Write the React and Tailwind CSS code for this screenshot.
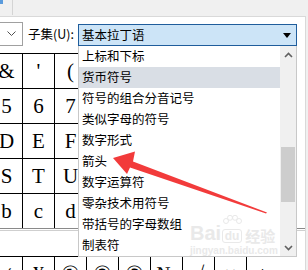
import React from 'react';

const cjk = { fontFamily: '"Noto Sans CJK SC", "Noto Sans", sans-serif' };
const serif = { fontFamily: '"Liberation Serif", "DejaVu Serif", serif' };

const subsets = [
  '上标和下标',
  '货币符号',
  '符号的组合分音记号',
  '类似字母的符号',
  '数字形式',
  '箭头',
  '数字运算符',
  '零杂技术用符号',
  '带括号的字母数组',
  '制表符',
];

const recent = ['≠', '¥', '①', '②', '③', '№', '√', '×', '±'];

function charAt(r, c) {
  return String.fromCharCode(0x26 + r * 15 + c);
}

function Chevron({ up }) {
  return (
    <svg width="9" height="6" viewBox="0 0 9 6">
      <polyline
        points={up ? '1,5 4.5,1.5 8,5' : '1,1 4.5,4.5 8,1'}
        fill="none"
        stroke="#606060"
        strokeWidth="1.6"
      />
    </svg>
  );
}

export default function App() {
  return (
    <div className="relative w-[308px] h-[270px] overflow-hidden bg-[#f0f0f0]" style={cjk}>
      {/* top strip */}
      <div className="h-[16px] flex">
        <div className="w-[3px] h-[4px] bg-[#5a9bdc]"></div>
        <div className="ml-[9px] w-px h-[15px] bg-[#d4d4d4]"></div>
      </div>

      {/* panel */}
      <div className="relative w-[306px] h-[254px] bg-white border-t border-r border-[#d9d9d9] overflow-hidden">
        <div className="flex items-end h-[29px]">
          <div className="w-[23px] h-[24px] border-t border-r border-b border-[#a0a0a0] flex items-center justify-center">
            <svg width="9" height="6" viewBox="0 0 9 6">
              <polyline points="0.5,0.5 4.5,4.5 8.5,0.5" fill="none" stroke="#505050" strokeWidth="1" />
            </svg>
          </div>
          <div className="ml-[5px] w-[50px] h-[24px] flex items-center text-[12.5px] text-black">子集(U):</div>
          <div className="w-[219px] h-[22px] border border-[#1f5d9c] bg-[#cce4f7] flex items-center justify-between pl-[3px] pr-[5px] text-[12.5px] text-black">
            <span>基本拉丁语</span>
            <svg width="8" height="5" viewBox="0 0 8 5">
              <polygon points="0,0 8,0 4,5" fill="#000" />
            </svg>
          </div>
        </div>

        {/* symbol grid */}
        <div className="mt-[7px] -ml-[10px] flex flex-col" style={serif}>
          {[0, 1, 2, 3, 4].map((r) => (
            <div key={r} className="flex">
              {[0, 1, 2, 3, 4, 5, 6, 7, 8].map((c) => (
                <div
                  key={c}
                  className="w-[32px] h-[35px] border-l border-t border-black flex items-center justify-center text-[21px] text-black leading-none"
                >
                  {charAt(r, c)}
                </div>
              ))}
            </div>
          ))}
        </div>
        <div className="h-px bg-[#8a8a8a]"></div>
        <div className="h-px bg-white"></div>
        <div className="h-px bg-[#cfcfcf]"></div>

        {/* recently used */}
        <div className="mt-[25px] -ml-[10px] flex" style={serif}>
          {recent.map((s, i) => (
            <div
              key={i}
              className="w-[32px] h-[35px] border-l border-t border-black flex items-center justify-center text-[21px] text-black leading-none"
            >
              {s}
            </div>
          ))}
        </div>

        {/* open dropdown list */}
        <div className="absolute left-[78px] top-[29px] w-[219px] h-[211px] bg-white border-l border-r border-b border-[#c8c8c8] flex">
          <div className="flex-1 flex flex-col">
            {subsets.map((s, i) => (
              <div
                key={s}
                className={`h-[21px] flex items-center pl-[3px] text-[12.5px] text-black ${i === 1 ? 'bg-[#d9dee5]' : ''}`}
              >
                {s}
              </div>
            ))}
          </div>
          <div className="w-[16px] bg-[#f0f0f0] flex flex-col">
            <div className="h-[17px] flex items-center justify-center">
              <Chevron up />
            </div>
            <div className="flex-1">
              <div className="mt-[84px] h-[55px] mx-px bg-[#cdcdcd]"></div>
            </div>
            <div className="h-[17px] flex items-center justify-center">
              <Chevron />
            </div>
          </div>
        </div>
      </div>

      {/* watermark */}
      <div className="absolute left-[190px] top-[211px] w-[90px] pointer-events-none text-[#e9e9e9]">
        <div className="flex items-end h-[32px]">
          <span className="text-[20px] font-bold leading-none" style={{ fontFamily: '"Liberation Sans", sans-serif' }}>Bai</span>
          <div className="flex flex-col items-center">
            <svg width="22" height="14" viewBox="0 0 22 14">
              <circle cx="5" cy="6" r="2.5" fill="none" stroke="#e9e9e9" />
              <circle cx="9" cy="2.8" r="2.5" fill="none" stroke="#e9e9e9" />
              <circle cx="14" cy="2.8" r="2.5" fill="none" stroke="#e9e9e9" />
              <circle cx="18" cy="6" r="2.5" fill="none" stroke="#e9e9e9" />
            </svg>
            <span className="px-[2px] rounded-[3px] border border-[#e9e9e9] text-[12px] font-bold leading-none" style={{ fontFamily: '"Liberation Sans", sans-serif' }}>du</span>
          </div>
          <span className="ml-[2px] text-[15px] font-bold leading-none">经验</span>
        </div>
        <div className="mt-[3px] text-[10px] font-bold leading-none" style={{ fontFamily: '"Liberation Sans", sans-serif' }}>jingyan.baidu.com</div>
      </div>

      {/* red annotation arrow */}
      <svg className="absolute left-0 top-0 pointer-events-none" width="308" height="270" viewBox="0 0 308 270">
        <polygon
          points="113,158 135,151.5 133,161.5 267,212.5 266,213.5 130,167.5 127,174"
          fill="#f23b3b"
        />
      </svg>
    </div>
  );
}
